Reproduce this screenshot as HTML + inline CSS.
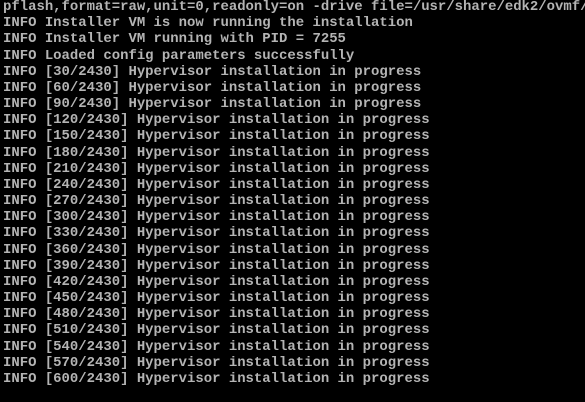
<!DOCTYPE html>
<html><head><meta charset="utf-8"><style>
html,body{margin:0;padding:0;background:#000;width:585px;height:402px;overflow:hidden}
pre{position:absolute;left:3px;top:-1px;margin:0;font-family:"Liberation Mono","DejaVu Sans Mono",monospace;font-size:13.95px;line-height:16.17px;color:#b4b4b4;white-space:pre;font-weight:bold;letter-spacing:0}
</style></head><body><pre>pflash,format=raw,unit=0,readonly=on -drive file=/usr/share/edk2/ovmf/
INFO Installer VM is now running the installation
INFO Installer VM running with PID = 7255
INFO Loaded config parameters successfully
INFO [30/2430] Hypervisor installation in progress
INFO [60/2430] Hypervisor installation in progress
INFO [90/2430] Hypervisor installation in progress
INFO [120/2430] Hypervisor installation in progress
INFO [150/2430] Hypervisor installation in progress
INFO [180/2430] Hypervisor installation in progress
INFO [210/2430] Hypervisor installation in progress
INFO [240/2430] Hypervisor installation in progress
INFO [270/2430] Hypervisor installation in progress
INFO [300/2430] Hypervisor installation in progress
INFO [330/2430] Hypervisor installation in progress
INFO [360/2430] Hypervisor installation in progress
INFO [390/2430] Hypervisor installation in progress
INFO [420/2430] Hypervisor installation in progress
INFO [450/2430] Hypervisor installation in progress
INFO [480/2430] Hypervisor installation in progress
INFO [510/2430] Hypervisor installation in progress
INFO [540/2430] Hypervisor installation in progress
INFO [570/2430] Hypervisor installation in progress
INFO [600/2430] Hypervisor installation in progress</pre></body></html>
